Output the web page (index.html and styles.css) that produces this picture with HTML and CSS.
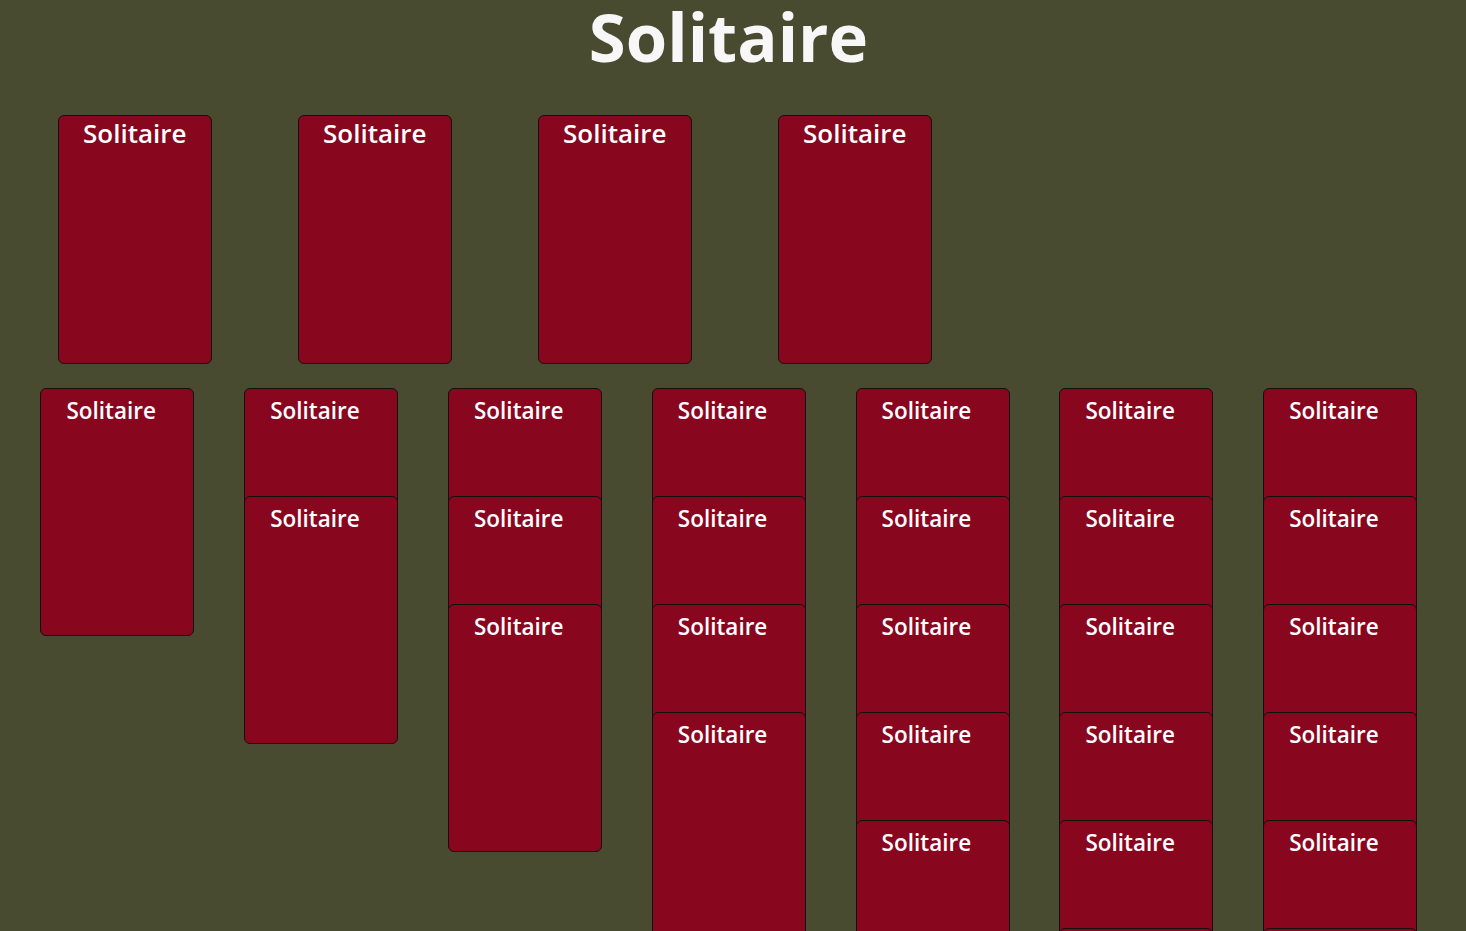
FILE: index.html
```html
<!DOCTYPE html>
<html lang="en">
<head>
  <meta charset="UTF-8" />
  <meta name="viewport" content="width=device-width, initial-scale=1" />
  <title>Solitaire</title>
  <link rel="stylesheet" href="styles.css">
</head>

<body>
  <h1 class="titulo">Solitaire</h1>

  <!-- Fundações -->
  <div class="fundacoes">
    <div class="carta grande"><span>Solitaire</span></div>
    <div class="carta grande"><span>Solitaire</span></div>
    <div class="carta grande"><span>Solitaire</span></div>
    <div class="carta grande"><span>Solitaire</span></div>
  </div>

  <!-- Mesa -->
  <div class="mesa">
    <div class="pilha">
      <div class="carta"><span>Solitaire</span></div>
    </div>
    <div class="pilha">
      <div class="carta"><span>Solitaire</span></div>
      <div class="carta"><span>Solitaire</span></div>
    </div>
    <div class="pilha">
      <div class="carta"><span>Solitaire</span></div>
      <div class="carta"><span>Solitaire</span></div>
      <div class="carta"><span>Solitaire</span></div>
    </div>
    <div class="pilha">
      <div class="carta"><span>Solitaire</span></div>
      <div class="carta"><span>Solitaire</span></div>
      <div class="carta"><span>Solitaire</span></div>
      <div class="carta"><span>Solitaire</span></div>
    </div>
    <div class="pilha">
      <div class="carta"><span>Solitaire</span></div>
      <div class="carta"><span>Solitaire</span></div>
      <div class="carta"><span>Solitaire</span></div>
      <div class="carta"><span>Solitaire</span></div>
      <div class="carta"><span>Solitaire</span></div>
    </div>
    <div class="pilha">
      <div class="carta"><span>Solitaire</span></div>
      <div class="carta"><span>Solitaire</span></div>
      <div class="carta"><span>Solitaire</span></div>
      <div class="carta"><span>Solitaire</span></div>
      <div class="carta"><span>Solitaire</span></div>
      <div class="carta"><span>Solitaire</span></div>
    </div>
    <div class="pilha">
      <div class="carta"><span>Solitaire</span></div>
      <div class="carta"><span>Solitaire</span></div>
      <div class="carta"><span>Solitaire</span></div>
      <div class="carta"><span>Solitaire</span></div>
      <div class="carta"><span>Solitaire</span></div>
      <div class="carta"><span>Solitaire</span></div>
      <div class="carta"><span>Solitaire</span></div>
    </div>
  </div>
</body>
</html>
```

FILE: styles.css
```css
* {
  box-sizing: border-box;
}

body {
  margin: 0;
  height: 100vh;
  overflow: hidden;
  background-color: #494b31;
  font-family: 'Open Sans', sans-serif;
  color: white;
}

.titulo {
  margin: 0;
  height: 115px;
  padding-right: 9px;
  font-size: 67px;
  line-height: 72px;
  font-weight: 700;
  text-align: center;
  color: #f7f7f7;
}

.fundacoes {
  display: flex;
  gap: 86px;
  padding-left: 58px;
}

.mesa {
  display: flex;
  align-items: flex-start;
  gap: 49.8px;
  padding-left: 40.4px;
  margin-top: 24px;
}

.pilha {
  display: flex;
  flex-direction: column;
}

.carta {
  width: 154px;
  height: 248px;
  background-color: #89061f;
  border: 1px solid #111;
  border-radius: 6px;
  padding: 7px 0 0 25px;
  font-size: 22.5px;
  font-weight: 600;
  line-height: 30px;
}

.pilha .carta + .carta {
  margin-top: -140px;
}

.carta.grande {
  height: 249px;
  padding: 0 0 0 24px;
  font-size: 26px;
  line-height: 34px;
}
```
